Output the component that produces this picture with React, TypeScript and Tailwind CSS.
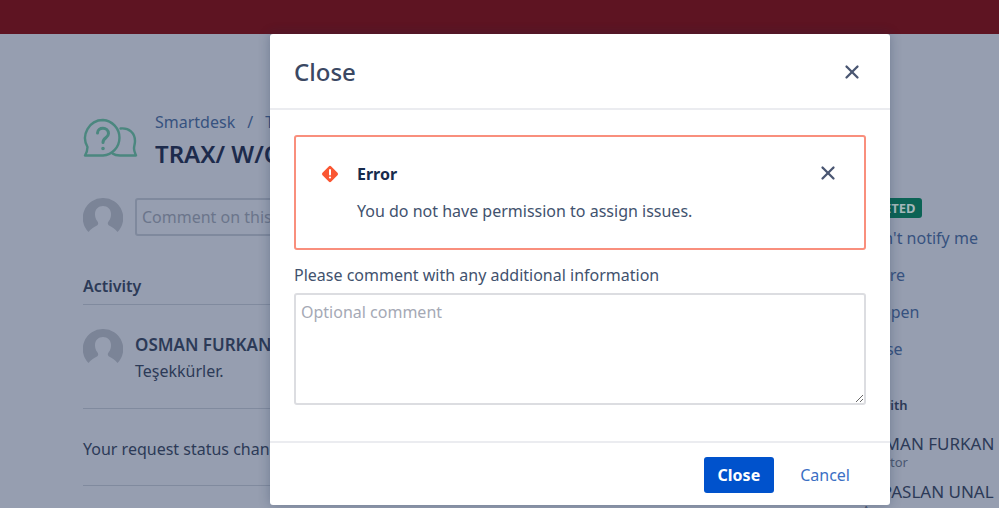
import type { ReactNode } from 'react';
import { X } from 'lucide-react';

interface Participant {
  name: string;
  role: string;
}

const actions = ["Don't notify me", 'Share', 'Reopen', 'Close'];

const participants: Participant[] = [
  { name: 'OSMAN FURKAN', role: 'Creator' },
  { name: 'ALPASLAN UNAL', role: 'Assurance' },
];

function Avatar() {
  return (
    <svg viewBox="0 0 40 40" className="w-10 h-10 shrink-0" aria-hidden="true">
      <path
        fill="#7b8497"
        d="M20 0A20 20 0 0 0 5.500 34C7.500 31 11 29 14 27.500C15.500 26.500 15.500 25 14.500 23.500C12.500 21 12 18.500 12 16C12 11 15.500 8 20 8S28 11 28 16C28 18.500 27.500 21 25.500 23.500C24.500 25 24.500 26.500 26 27.500C29 29 32.500 31 34.500 34A20 20 0 0 0 20 0Z"
      />
    </svg>
  );
}

function HelpIcon() {
  return (
    <svg
      viewBox="0 0 56 42"
      className="w-14 h-[42px] shrink-0"
      fill="none"
      stroke="#4b877f"
      strokeWidth="2.4"
      strokeLinejoin="round"
      strokeLinecap="round"
      aria-hidden="true"
    >
      <path d="M20 2A18 18 0 0 0 4.500 29C4.500 32 3.500 35 2 37.500H20A17.800 17.800 0 0 0 20 2Z" />
      <path d="M37.500 10.500C46 9.500 52 15 52 23C52 26 51 28 51 30.500C51 33 52 35 53 37.500H37C34 37.500 31.500 37 29.500 35.500" />
      <path d="M14.500 15C14.500 8.500 25.500 8.500 25.500 15.500C25.500 20 20 19.500 20 24.500" strokeWidth="3" />
      <circle cx="20" cy="30.500" r="0.8" strokeWidth="2" />
    </svg>
  );
}

function ErrorIcon() {
  return (
    <svg viewBox="0 0 18 18" className="w-[18px] h-[18px]" aria-hidden="true">
      <rect x="2.800" y="2.800" width="12.400" height="12.400" rx="1.800" fill="#fa5632" transform="rotate(45 9 9)" />
      <path d="M9 5V9.500" stroke="#fff" strokeWidth="2" strokeLinecap="round" />
      <circle cx="9" cy="12.500" r="1.100" fill="#fff" />
    </svg>
  );
}

function IconButton({ label }: { label: string }) {
  return (
    <button type="button" aria-label={label} className="text-[#4a5672]">
      <X className="w-[22px] h-[22px]" strokeWidth={2.5} />
    </button>
  );
}

function ActivityRow({ children }: { children: ReactNode }) {
  return <li className="flex gap-3 border-b border-[#808a9e]">{children}</li>;
}

function RequestPage() {
  return (
    <div className="flex justify-between pl-[83px] pt-[76px]">
      <main className="w-[700px]">
        <header className="flex gap-4">
          <div className="pt-2">
            <HelpIcon />
          </div>
          <div>
            <nav className="flex gap-3 text-base leading-6 text-[#36527f]">
              <a href="#smartdesk">Smartdesk</a>
              <span>/</span>
              <a href="#trax">TRAX</a>
            </nav>
            <h1 className="pt-1 text-2xl leading-8 font-semibold text-[#1d2b4c]">TRAX/ W/O</h1>
          </div>
        </header>

        <div className="flex gap-3 pt-7">
          <Avatar />
          <input
            type="text"
            aria-label="Comment"
            placeholder="Comment on this request..."
            className="h-[38px] flex-1 rounded-[3px] border-2 border-[#7f899d] bg-transparent px-[5px] text-base placeholder:text-[#6b758b]"
          />
        </div>

        <h2 className="pt-9 pb-1.5 text-base leading-6 font-semibold border-b border-[#808a9e]">Activity</h2>
        <ul>
          <ActivityRow>
            <div className="py-6">
              <Avatar />
            </div>
            <div className="pt-[27px] pb-6">
              <p className="text-[17px] leading-[26px] font-semibold">OSMAN FURKAN</p>
              <p className="text-base leading-[26px]">Teşekkürler.</p>
            </div>
          </ActivityRow>
          <ActivityRow>
            <p className="pt-7 pb-6 text-base leading-6">Your request status changed</p>
          </ActivityRow>
        </ul>
      </main>

      <aside className="w-[167px] pt-[88px] whitespace-nowrap">
        <div className="flex">
          <span className="rounded-[3px] bg-[#0c6355] px-1.5 text-[13px] leading-5 font-bold text-[#a5b8bb]">
            COMPLETED
          </span>
        </div>
        <ul className="flex flex-col items-start gap-[13px] pl-[30px] pt-2 text-base leading-6 text-[#36527f]">
          {actions.map((action) => (
            <li key={action}>
              <button type="button">{action}</button>
            </li>
          ))}
        </ul>
        <h2 className="pt-8 text-[13px] leading-6 font-semibold">Shared with</h2>
        <ul className="pl-[30px] pt-[17px]">
          {participants.map((person) => (
            <li key={person.name} className="pb-3">
              <p className="text-[17px] leading-5">{person.name}</p>
              <p className="text-[13px] leading-4 text-[#4b5872]">{person.role}</p>
            </li>
          ))}
        </ul>
      </aside>
    </div>
  );
}

function CloseDialog() {
  return (
    <section
      role="dialog"
      aria-labelledby="dialog-title"
      className="w-[620px] rounded-[3px] bg-white text-[#42526e] shadow-[0_0_12px_rgba(23,43,77,0.3)]"
    >
      <header className="flex items-center justify-between border-b-2 border-[#ebecf0] pt-5 pr-[27px] pb-[18px] pl-6">
        <h2 id="dialog-title" className="text-2xl leading-9 font-medium text-[#3b4863]">Close</h2>
        <IconButton label="Close dialog" />
      </header>

      <div className="px-6 pt-[25px] pb-9">
        <div
          role="alert"
          className="flex items-start gap-[18px] rounded-[3px] border-2 border-[#f98f7d] px-[25px] pt-[25px] pb-6"
        >
          <div className="pt-[3px]">
            <ErrorIcon />
          </div>
          <div className="flex-1">
            <h3 className="text-base leading-6 font-bold text-[#172b4d]">Error</h3>
            <p className="pt-3 text-base leading-[26px]">You do not have permission to assign issues.</p>
          </div>
          <IconButton label="Dismiss error" />
        </div>
        <label htmlFor="comment" className="block pt-[13px] pb-1.5 text-base leading-6">
          Please comment with any additional information
        </label>
        <textarea
          id="comment"
          placeholder="Optional comment"
          className="block h-28 w-full rounded-[3px] border-2 border-[#dcdde1] px-[5px] py-[5px] text-base leading-6 placeholder:text-[#a5a9b5]"
        />
      </div>

      <footer className="flex justify-end gap-2.5 border-t-2 border-[#ebecf0] px-6 pt-3.5 pb-3">
        <button type="button" className="h-9 rounded-[3px] bg-[#0052cc] px-3.5 text-base font-bold text-white">
          Close
        </button>
        <button type="button" className="h-9 px-4 text-base text-[#3b6fc4]">
          Cancel
        </button>
      </footer>
    </section>
  );
}

export default function App() {
  return (
    <div className="relative h-screen overflow-hidden bg-[#969eb0] font-['Noto_Sans','Open_Sans',sans-serif] text-[#2c3a57]">
      <div className="h-[34px] bg-[#5e1422]" />
      <RequestPage />
      <div className="absolute inset-0 flex items-start justify-end pt-[34px] pr-[109px]">
        <CloseDialog />
      </div>
    </div>
  );
}
